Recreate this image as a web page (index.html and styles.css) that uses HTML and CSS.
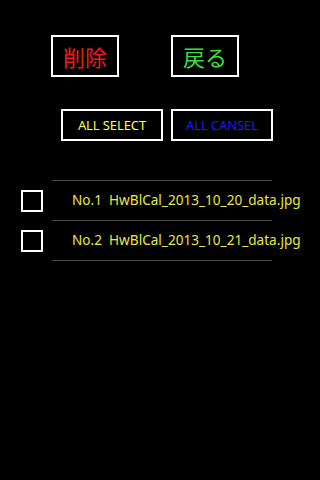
FILE: index.html
```html
<!DOCTYPE html>
<html>
<head>
<meta charset="utf-8">
<link rel="stylesheet" href="styles.css">
</head>
<body>
<div class="screen">
  <div class="top-row">
    <div class="big-btn del">削除</div>
    <div class="big-btn back">戻る</div>
  </div>
  <div class="sel-row">
    <div class="small-btn sel">ALL SELECT</div>
    <div class="small-btn cancel">ALL CANSEL</div>
  </div>
  <div class="list">
    <div class="item">
      <div class="check"></div>
      <div class="name">No.1&nbsp;&nbsp;HwBlCal_2013_10_20_data.jpg</div>
    </div>
    <div class="item">
      <div class="check"></div>
      <div class="name">No.2&nbsp;&nbsp;HwBlCal_2013_10_21_data.jpg</div>
    </div>
  </div>
</div>
</body>
</html>
```
FILE: styles.css
```css
html, body {
  margin: 0;
  padding: 0;
  background: #000;
}
.screen {
  width: 320px;
  height: 480px;
  background: #000;
  overflow: hidden;
  font-family: "Noto Sans", "Noto Sans CJK JP", sans-serif;
  padding-top: 35px;
  box-sizing: border-box;
}
.top-row {
  display: flex;
  padding-left: 51px;
  gap: 52px;
}
.big-btn {
  width: 68px;
  height: 42px;
  border: 2px solid #fff;
  box-sizing: border-box;
  display: flex;
  align-items: center;
  justify-content: center;
  font-family: "Noto Sans CJK JP", sans-serif;
  font-size: 22px;
  line-height: 1;
}
.del { color: #ee1c1c; }
.back { color: #3adf3a; }
.sel-row {
  display: flex;
  margin-top: 32px;
  padding-left: 61px;
  gap: 8px;
}
.small-btn {
  width: 102px;
  height: 32px;
  border: 2px solid #fff;
  box-sizing: border-box;
  display: flex;
  align-items: center;
  justify-content: center;
  font-size: 13px;
  letter-spacing: -0.1px;
}
.sel { color: #ffff33; }
.cancel { color: #1c1cf0; }
.list {
  margin-top: 39px;
}
.item {
  height: 39px;
  display: flex;
  align-items: center;
  border-top: 1px solid #4a4a4a;
  margin-left: 52px;
  width: 220px;
}
.item:last-child {
  border-bottom: 1px solid #4a4a4a;
}
.check {
  width: 22px;
  height: 22px;
  border: 2px solid #fff;
  box-sizing: border-box;
  margin-left: -31px;
  flex: none;
}
.name {
  margin-left: 29px;
  margin-top: -2px;
  white-space: nowrap;
  color: #e8e840;
  font-size: 13.6px;
}
```
